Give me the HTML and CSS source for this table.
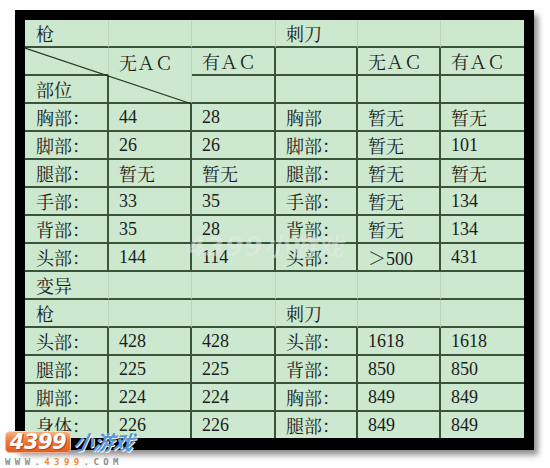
FILE: index.html
```html
<!DOCTYPE html>
<html lang="zh">
<head>
<meta charset="utf-8">
<title>伤害表</title>
<link rel="stylesheet" href="styles.css">
</head>
<body>
<div class="frame">
  <div class="grid">
    <div class="row r1"><div class="c">枪</div><div class="c"></div><div class="c"></div><div class="c">刺刀</div><div class="c"></div><div class="c last"></div></div>
    <div class="row r2"><div class="c a"></div><div class="c b">无ＡＣ</div><div class="c cc">有ＡＣ</div><div class="c d"></div><div class="c d">无ＡＣ</div><div class="c last">有ＡＣ</div></div>
    <div class="row r3"><div class="c a">部位</div><div class="c b"></div><div class="c cc"></div><div class="c d"></div><div class="c d"></div><div class="c last"></div></div>
    <div class="row full"><div class="c">胸部：</div><div class="c">44</div><div class="c">28</div><div class="c">胸部</div><div class="c">暂无</div><div class="c last">暂无</div></div>
    <div class="row full"><div class="c">脚部：</div><div class="c">26</div><div class="c">26</div><div class="c">脚部：</div><div class="c">暂无</div><div class="c last">101</div></div>
    <div class="row full"><div class="c">腿部：</div><div class="c">暂无</div><div class="c">暂无</div><div class="c">腿部：</div><div class="c">暂无</div><div class="c last">暂无</div></div>
    <div class="row full"><div class="c">手部：</div><div class="c">33</div><div class="c">35</div><div class="c">手部：</div><div class="c">暂无</div><div class="c last">134</div></div>
    <div class="row full"><div class="c">背部：</div><div class="c">35</div><div class="c">28</div><div class="c">背部：</div><div class="c">暂无</div><div class="c last">134</div></div>
    <div class="row full"><div class="c">头部：</div><div class="c">144</div><div class="c">114</div><div class="c">头部：</div><div class="c">＞500</div><div class="c last">431</div></div>
    <div class="row r1"><div class="c">变异</div><div class="c"></div><div class="c"></div><div class="c"></div><div class="c"></div><div class="c last"></div></div>
    <div class="row r1"><div class="c">枪</div><div class="c"></div><div class="c"></div><div class="c">刺刀</div><div class="c"></div><div class="c last"></div></div>
    <div class="row full"><div class="c">头部：</div><div class="c">428</div><div class="c">428</div><div class="c">头部：</div><div class="c">1618</div><div class="c last">1618</div></div>
    <div class="row full"><div class="c">腿部：</div><div class="c">225</div><div class="c">225</div><div class="c">背部：</div><div class="c">850</div><div class="c last">850</div></div>
    <div class="row full"><div class="c">脚部：</div><div class="c">224</div><div class="c">224</div><div class="c">胸部：</div><div class="c">849</div><div class="c last">849</div></div>
    <div class="row full end"><div class="c">身体：</div><div class="c">226</div><div class="c">226</div><div class="c">腿部：</div><div class="c">849</div><div class="c last">849</div></div>
  </div>
  <svg class="diag" width="168" height="58" viewBox="0 0 168 58"><line x1="0" y1="1" x2="167" y2="57" stroke="#24381f" stroke-width="1.3"/></svg>
  <div class="wm">4399小游戏</div>
</div>
<div class="logo">
  <div class="logo-top"><span class="badge">4399</span><span class="xyx">小游戏</span></div>
  <div class="url">WWW.<span class="o">4399</span>.COM</div>
</div>
</body>
</html>
```

FILE: styles.css
```css
html, body {
  margin: 0;
  padding: 0;
  background: #ffffff;
}
body {
  width: 550px;
  height: 468px;
  overflow: hidden;
  position: relative;
  font-family: "Liberation Serif", "Noto Serif CJK SC", "Noto Sans CJK SC", serif;
  color: #1c1c1c;
}
.frame {
  position: relative;
  margin: 10px 0 0 15px;
  width: 499px;
  height: 418px;
  border: 10px solid #000;
  border-bottom-width: 12px;
  box-shadow: 4px 5px 6px rgba(0, 0, 0, 0.45);
  background: #cce8cf;
}
.grid {
  display: grid;
  grid-template-columns: 84px 83px 84px 82px 83px 83px;
  grid-template-rows: repeat(15, 1fr);
  height: 418px;
}
.row { display: contents; }
.c {
  box-sizing: border-box;
  display: flex;
  align-items: center;
  padding-left: 10px;
  font-size: 18px;
  white-space: nowrap;
  border-right: 1px solid #bad3bb;
  border-bottom: 2px solid #3a543a;
}
.c:first-child { padding-left: 11px; }
.c.last { border-right: none; }
.full .c { border-right: 2px solid #3a543a; }
.full .c.last { border-right: none; }
.end .c { border-bottom: none; }
.r2 .b { border-bottom: none; }
.r2 .cc, .r3 .cc, .r2 .d, .r3 .d { border-right: 2px solid #3a543a; }
.r3 .a { border-right: 2px solid #3a543a; }
.diag {
  position: absolute;
  left: 0;
  top: 27px;
}
.wm {
  position: absolute;
  left: 162px;
  top: 206px;
  font-family: "DejaVu Sans", "Noto Sans CJK SC", sans-serif;
  font-weight: bold;
  font-style: italic;
  font-size: 26px;
  color: rgba(255, 255, 255, 0.4);
  text-shadow: 0 0 1px rgba(150, 170, 150, 0.2);
  letter-spacing: 1px;
  pointer-events: none;
}
.logo {
  position: absolute;
  left: 5px;
  top: 431px;
  width: 130px;
}
.logo-top {
  display: flex;
  align-items: center;
  gap: 3px;
}
.badge {
  display: inline-block;
  width: 66px;
  height: 22px;
  line-height: 22px;
  text-align: center;
  border-radius: 5px;
  background: linear-gradient(#f9b88a, #ee7a3c 45%, #df5a1c);
  color: #fff;
  font-family: "DejaVu Sans", sans-serif;
  font-weight: bold;
  font-style: italic;
  font-size: 21px;
  letter-spacing: -0.5px;
  text-shadow: 1px 1px 0 #b4461a;
  box-shadow: inset 0 0 0 1px rgba(255, 255, 255, 0.5);
}
.xyx {
  font-family: "Noto Sans CJK SC", sans-serif;
  font-weight: bold;
  font-style: italic;
  font-size: 20px;
  color: #5b95d6;
  transform: skewX(-12deg);
  text-shadow: 1px 1px 0 #fff;
  line-height: 22px;
}
.url {
  margin-top: 5px;
  font-family: "DejaVu Sans Mono", monospace;
  font-weight: bold;
  font-size: 9px;
  line-height: 9px;
  letter-spacing: 4.4px;
  color: #8c8c8c;
}
.url .o { color: #f08a3a; }
```
